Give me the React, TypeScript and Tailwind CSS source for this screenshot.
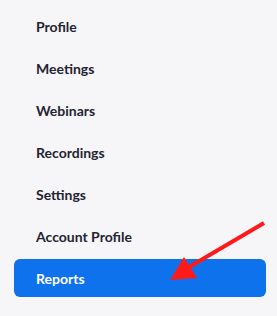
import React from "react";

const items = ["Profile", "Meetings", "Webinars", "Recordings", "Settings", "Account Profile", "Reports"];

export default function App() {
  return (
    <div className="relative w-[277px] h-[316px] bg-[#f6f6f8] overflow-hidden" style={{ fontFamily: "Lato, 'Noto Sans', sans-serif" }}>
      <div className="flex flex-col gap-1 pt-[7px] pl-[14px] pr-[11px]">
        {items.map((it) => {
          const active = it === "Reports";
          return (
            <div
              key={it}
              className={
                active
                  ? "h-[38px] flex items-center px-[22px] rounded-[6px] bg-[#0e72ed] text-white text-[14px] font-bold"
                  : "h-[38px] flex items-center px-[22px] text-[#232333] text-[14px] font-bold"
              }
            >
              {it}
            </div>
          );
        })}
      </div>
      <svg className="absolute left-0 top-0" width="277" height="316" viewBox="0 0 277 316">
        <line x1="264" y1="223" x2="184" y2="270" stroke="#ff1a1a" strokeWidth="4" />
        <polygon points="170,280 184,257 197,278" fill="#ff1a1a" />
      </svg>
    </div>
  );
}
